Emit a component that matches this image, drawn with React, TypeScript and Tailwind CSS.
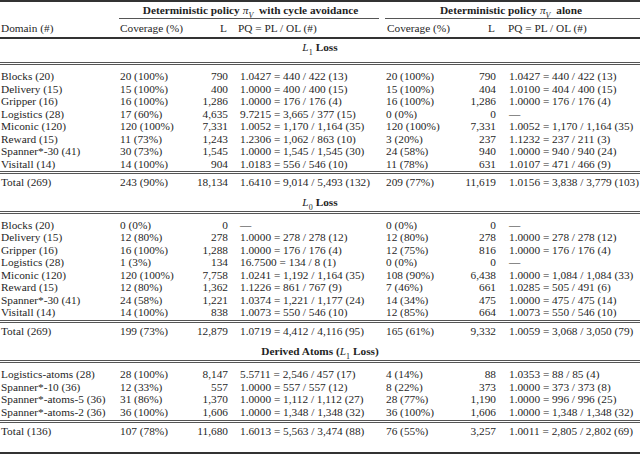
import type { ReactNode } from 'react'

type Row = string[]

const grid = 'grid grid-cols-[119px_71px_44px_148px_68px_52px_138px]'

const l1Rows: Row[] = [
  ['Blocks (20)', '20 (100%)', '790', '1.0427 = 440 / 422 (13)', '20 (100%)', '790', '1.0427 = 440 / 422 (13)'],
  ['Delivery (15)', '15 (100%)', '400', '1.0000 = 400 / 400 (15)', '15 (100%)', '404', '1.0100 = 404 / 400 (15)'],
  ['Gripper (16)', '16 (100%)', '1,286', '1.0000 = 176 / 176 (4)', '16 (100%)', '1,286', '1.0000 = 176 / 176 (4)'],
  ['Logistics (28)', '17 (60%)', '4,635', '9.7215 = 3,665 / 377 (15)', '0 (0%)', '0', '—'],
  ['Miconic (120)', '120 (100%)', '7,331', '1.0052 = 1,170 / 1,164 (35)', '120 (100%)', '7,331', '1.0052 = 1,170 / 1,164 (35)'],
  ['Reward (15)', '11 (73%)', '1,243', '1.2306 = 1,062 / 863 (10)', '3 (20%)', '237', '1.1232 = 237 / 211 (3)'],
  ['Spanner*-30 (41)', '30 (73%)', '1,545', '1.0000 = 1,545 / 1,545 (30)', '24 (58%)', '940', '1.0000 = 940 / 940 (24)'],
  ['Visitall (14)', '14 (100%)', '904', '1.0183 = 556 / 546 (10)', '11 (78%)', '631', '1.0107 = 471 / 466 (9)'],
]
const l1Total: Row = ['Total (269)', '243 (90%)', '18,134', '1.6410 = 9,014 / 5,493 (132)', '209 (77%)', '11,619', '1.0156 = 3,838 / 3,779 (103)']

const l0Rows: Row[] = [
  ['Blocks (20)', '0 (0%)', '0', '—', '0 (0%)', '0', '—'],
  ['Delivery (15)', '12 (80%)', '278', '1.0000 = 278 / 278 (12)', '12 (80%)', '278', '1.0000 = 278 / 278 (12)'],
  ['Gripper (16)', '16 (100%)', '1,288', '1.0000 = 176 / 176 (4)', '12 (75%)', '816', '1.0000 = 176 / 176 (4)'],
  ['Logistics (28)', '1 (3%)', '134', '16.7500 = 134 / 8 (1)', '0 (0%)', '0', '—'],
  ['Miconic (120)', '120 (100%)', '7,758', '1.0241 = 1,192 / 1,164 (35)', '108 (90%)', '6,438', '1.0000 = 1,084 / 1,084 (33)'],
  ['Reward (15)', '12 (80%)', '1,362', '1.1226 = 861 / 767 (9)', '7 (46%)', '661', '1.0285 = 505 / 491 (6)'],
  ['Spanner*-30 (41)', '24 (58%)', '1,221', '1.0374 = 1,221 / 1,177 (24)', '14 (34%)', '475', '1.0000 = 475 / 475 (14)'],
  ['Visitall (14)', '14 (100%)', '838', '1.0073 = 550 / 546 (10)', '12 (85%)', '664', '1.0073 = 550 / 546 (10)'],
]
const l0Total: Row = ['Total (269)', '199 (73%)', '12,879', '1.0719 = 4,412 / 4,116 (95)', '165 (61%)', '9,332', '1.0059 = 3,068 / 3,050 (79)']

const atomRows: Row[] = [
  ['Logistics-atoms (28)', '28 (100%)', '8,147', '5.5711 = 2,546 / 457 (17)', '4 (14%)', '88', '1.0353 = 88 / 85 (4)'],
  ['Spanner*-10 (36)', '12 (33%)', '557', '1.0000 = 557 / 557 (12)', '8 (22%)', '373', '1.0000 = 373 / 373 (8)'],
  ['Spanner*-atoms-5 (36)', '31 (86%)', '1,370', '1.0000 = 1,112 / 1,112 (27)', '28 (77%)', '1,190', '1.0000 = 996 / 996 (25)'],
  ['Spanner*-atoms-2 (36)', '36 (100%)', '1,606', '1.0000 = 1,348 / 1,348 (32)', '36 (100%)', '1,606', '1.0000 = 1,348 / 1,348 (32)'],
]
const atomTotal: Row = ['Total (136)', '107 (78%)', '11,680', '1.6013 = 5,563 / 3,474 (88)', '76 (55%)', '3,257', '1.0011 = 2,805 / 2,802 (69)']

function DataRow({ row }: { row: Row }) {
  return (
    <div className={`${grid} h-[12.5px] leading-[12.5px] whitespace-nowrap`}>
      <div className="pl-px">{row[0]}</div>
      <div className="pl-px">{row[1]}</div>
      <div className="pr-[6px] text-right">{row[2]}</div>
      <div className="pl-[6px]">{row[3]}</div>
      <div className="pl-[4px]">{row[4]}</div>
      <div className="pr-[6px] text-right">{row[5]}</div>
      <div className="pl-[7px]">{row[6]}</div>
    </div>
  )
}

function DoubleRule() {
  return (
    <div className="flex flex-col gap-px shrink-0">
      <div className="h-px bg-[#555]" />
      <div className="h-px bg-[#555]" />
    </div>
  )
}

function Section({ label, rows, total, first, last }: { label: ReactNode; rows: Row[]; total: Row; first?: boolean; last?: boolean }) {
  return (
    <div className={`shrink-0 ${first ? '' : last ? 'pt-[7px]' : 'pt-[6px]'}`}>
      <div className={`text-center leading-[14px] h-[14px] ${first ? 'mt-px mb-[8px]' : 'mb-[2px]'}`}>{label}</div>
      <DoubleRule />
      <div className={`pt-[5px] ${last ? 'pb-[2px]' : 'pb-px'}`}>
        {rows.map((r) => (
          <DataRow key={r[0]} row={r} />
        ))}
      </div>
      <DoubleRule />
      <div className="pt-[2px]">
        <DataRow row={total} />
      </div>
    </div>
  )
}

function LossLabel({ sub }: { sub: string }) {
  return (
    <span>
      <i>L</i>
      <sub className="text-[8px] align-[-2px]">{sub}</sub>
      <b className="ml-[3px]">Loss</b>
    </span>
  )
}

function Pi() {
  return (
    <span className="font-normal mx-[3px]">
      <i>π</i>
      <sub className="text-[8px] align-[-2px] italic">V</sub>
    </span>
  )
}

export default function App() {
  return (
    <div
      className="w-[640px] h-screen max-h-[454px] bg-white text-[#1f1f1f] text-[11.3px] overflow-hidden flex flex-col"
      style={{ fontFamily: '"Liberation Serif", "DejaVu Serif", serif' }}
    >
      <div className="h-[2px] bg-[#333] shrink-0" />
      {/* group headers */}
      <div className={`${grid} h-[16px] leading-[16px] font-bold whitespace-nowrap shrink-0`}>
        <div />
        <div className="col-span-3 text-center">
          Deterministic policy<Pi /> with cycle avoidance
        </div>
        <div className="col-span-3 text-center">
          Deterministic policy<Pi /> alone
        </div>
      </div>
      <div className={`${grid} h-px shrink-0`}>
        <div />
        <div className="col-span-3 bg-[#555] mr-[3px]" />
        <div className="col-span-3 bg-[#555] ml-[3px]" />
      </div>
      <div className={`${grid} h-[18px] leading-[18px] whitespace-nowrap shrink-0`}>
        <div className="pl-px">Domain (#)</div>
        <div className="pl-px">Coverage (%)</div>
        <div className="pr-[7px] text-right">L</div>
        <div className="pl-[4px]">PQ = PL / OL (#)</div>
        <div className="pl-[5px]">Coverage (%)</div>
        <div className="pr-[7px] text-right">L</div>
        <div className="pl-[6px]">PQ = PL / OL (#)</div>
      </div>
      <div className="h-[2px] bg-[#333] shrink-0" />

      <Section first label={<LossLabel sub="1" />} rows={l1Rows} total={l1Total} />
      <Section label={<LossLabel sub="0" />} rows={l0Rows} total={l0Total} />
      <Section
        last
        label={
          <span>
            <b>Derived Atoms (</b>
            <i>L</i>
            <sub className="text-[8px] align-[-2px]">1</sub>
            <b className="ml-[3px]">Loss)</b>
          </span>
        }
        rows={atomRows}
        total={atomTotal}
      />
      <div className="mt-auto h-[2px] bg-[#333] shrink-0" />
    </div>
  )
}
